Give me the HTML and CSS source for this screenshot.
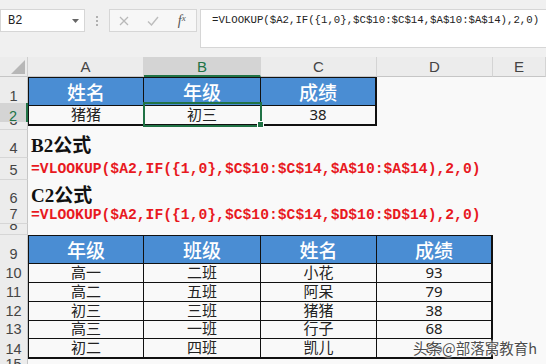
FILE: index.html
```html
<!DOCTYPE html>
<html lang="zh">
<head>
  <meta charset="UTF-8" />
  <title>VLOOKUP 反向查找</title>
  <link rel="stylesheet" href="styles.css">
</head>
<body>
  <div class="toolbar">
    <div class="namebox">
      <span>B2</span>
      <svg width="7" height="4" viewBox="0 0 7 4"><path d="M0 0h7L3.5 4z" fill="#666"/></svg>
    </div>
    <div class="grip"><i></i><i></i><i></i></div>
    <div class="fx-buttons">
      <span><svg width="10" height="10" viewBox="0 0 10 10"><path d="M1 1l8 8M9 1l-8 8" stroke="#b9b9b9" stroke-width="1.3"/></svg></span>
      <span><svg width="12" height="10" viewBox="0 0 12 10"><path d="M1 5.5l3.5 3.5L11 1" stroke="#bdbdbd" stroke-width="1.4" fill="none"/></svg></span>
      <span class="fx">f<sub>x</sub></span>
    </div>
    <div class="formula-input">=VLOOKUP($A2,IF({1,0},$C$10:$C$14,$A$10:$A$14),2,0)</div>
  </div>

  <div class="sheet">
    <div class="row colhead">
      <div class="corner"><svg width="14" height="14" viewBox="0 0 14 14"><path d="M14 0v14H0z" fill="#b7b7b7"/></svg></div>
      <div class="ch">A</div>
      <div class="ch sel">B</div>
      <div class="ch">C</div>
      <div class="ch">D</div>
      <div class="ch">E</div>
    </div>

    <div class="row h26">
      <div class="rh">1</div>
      <div class="c th first top">姓名</div>
      <div class="c th top">年级</div>
      <div class="c th top last">成绩</div>
    </div>
    <div class="row h19">
      <div class="rh sel">2</div>
      <div class="c td first bottom">猪猪</div>
      <div class="c td bottom active">初三</div>
      <div class="c td bottom last num">38</div>
    </div>
    <div class="row h8"><div class="rh">3</div></div>
    <div class="row h28">
      <div class="rh">4</div>
      <div class="note">B2公式</div>
    </div>
    <div class="row h22">
      <div class="rh">5</div>
      <div class="formula">=VLOOKUP($A2,IF({1,0},$C$10:$C$14,$A$10:$A$14),2,0)</div>
    </div>
    <div class="row h25">
      <div class="rh">6</div>
      <div class="note">C2公式</div>
    </div>
    <div class="row h19">
      <div class="rh">7</div>
      <div class="formula">=VLOOKUP($A2,IF({1,0},$C$10:$C$14,$D$10:$D$14),2,0)</div>
    </div>
    <div class="row h11"><div class="rh">8</div></div>

    <div class="row h26">
      <div class="rh">9</div>
      <div class="c th first top">年级</div>
      <div class="c th top">班级</div>
      <div class="c th top">姓名</div>
      <div class="c th top last">成绩</div>
    </div>
    <div class="row h19">
      <div class="rh">10</div>
      <div class="c td first">高一</div><div class="c td">二班</div><div class="c td">小花</div><div class="c td last num">93</div>
    </div>
    <div class="row h19">
      <div class="rh">11</div>
      <div class="c td first">高二</div><div class="c td">五班</div><div class="c td">阿呆</div><div class="c td last num">79</div>
    </div>
    <div class="row h18">
      <div class="rh">12</div>
      <div class="c td first">初三</div><div class="c td">三班</div><div class="c td">猪猪</div><div class="c td last num">38</div>
    </div>
    <div class="row h19">
      <div class="rh">13</div>
      <div class="c td first">高三</div><div class="c td">一班</div><div class="c td">行子</div><div class="c td last num">68</div>
    </div>
    <div class="row h19">
      <div class="rh">14</div>
      <div class="c td first bottom">初二</div><div class="c td bottom">四班</div><div class="c td bottom">凯儿</div><div class="c td bottom last num">86</div>
    </div>
    <div class="row h19"><div class="rh">15</div></div>
  </div>

  <div class="watermark">头条@部落窝教育h</div>
</body>
</html>
```

FILE: styles.css
```css
* {
  box-sizing: border-box;
}
body {
  margin: 0;
  width: 546px;
  height: 364px;
  overflow: hidden;
  position: relative;
  background: #f9f9f9;
  color: #222;
  font-family: "Liberation Sans", "Noto Sans CJK SC", sans-serif;
}

/* formula bar */
.toolbar {
  height: 57px;
  background: #f0f0f0;
  display: flex;
  align-items: flex-start;
  padding-top: 9px;
}
.namebox {
  width: 85px;
  height: 23px;
  background: #fff;
  border: 1px solid #d6d6d6;
  display: flex;
  align-items: center;
  justify-content: space-between;
  padding: 0 5px 0 7px;
  font-size: 12px;
  font-family: "Liberation Mono", monospace;
}
.grip {
  width: 24px;
  height: 23px;
  display: flex;
  flex-direction: column;
  align-items: center;
  justify-content: center;
  gap: 2px;
}
.grip i {
  width: 2px;
  height: 2px;
  background: #b0b0b0;
}
.fx-buttons {
  width: 88px;
  height: 23px;
  background: #f7f7f7;
  border: 1px solid #d6d6d6;
  display: flex;
  align-items: center;
}
.fx-buttons span {
  width: 29px;
  display: flex;
  justify-content: center;
}
.fx {
  font-family: "Liberation Serif", serif;
  font-style: italic;
  font-size: 14px;
  color: #555;
}
.fx sub {
  font-size: 9px;
}
.formula-input {
  flex: 1;
  margin-left: 3px;
  height: 39px;
  background: #fff;
  border: 1px solid #d6d6d6;
  border-right: none;
  padding: 4px 0 0 11px;
  font-family: "Liberation Mono", monospace;
  font-size: 10.7px;
  color: #222;
  white-space: nowrap;
}

/* sheet grid */
.row {
  display: grid;
  grid-template-columns: 28px 116px 117px 116px 116px 1fr;
}
.h26 { height: 26px; }
.h19 { height: 19px; }
.h18 { height: 18px; }
.h8 { height: 8px; }
.h11 { height: 11px; }
.h22 { height: 22px; }
.h25 { height: 25px; }
.h28 { height: 28px; }

.colhead {
  height: 20px;
  background: #ececec;
}
.corner {
  display: flex;
  align-items: flex-end;
  justify-content: flex-end;
  padding: 0 2px 2px 0;
  border-right: 1px solid #cfcfcf;
  border-bottom: 1px solid #c6c6c6;
}
.ch {
  display: flex;
  align-items: center;
  justify-content: center;
  font-size: 15px;
  color: #444;
  border-right: 1px solid #d4d4d4;
  border-bottom: 1px solid #c6c6c6;
}
.ch.sel {
  background: #d4d4d4;
  color: #217346;
  border-bottom: 2px solid #217346;
}
.rh {
  grid-column: 1;
  background: #ececec;
  border-right: 1px solid #c6c6c6;
  border-bottom: 1px solid #d6d6d6;
  display: flex;
  align-items: flex-end;
  justify-content: center;
  overflow: hidden;
  font-size: 14.5px;
  line-height: 17px;
  color: #444;
}
.rh.sel {
  background: #d4d4d4;
  color: #217346;
  border-right: 2px solid #217346;
}

/* cells */
.c {
  display: flex;
  align-items: center;
  justify-content: center;
  border-right: 1px solid #111;
  border-bottom: 1px solid #111;
  font-family: "Noto Sans CJK SC", sans-serif;
  white-space: nowrap;
}
.c.first { border-left: 1px solid #111; }
.c.top { border-top: 1px solid #111; }
.c.last { border-right: 2px solid #111; }
.c.bottom { border-bottom: 2px solid #111; }
.th {
  background: #4a8dd3;
  color: #fff;
  font-size: 19px;
  font-weight: 500;
}
.td {
  font-size: 15px;
  color: #222;
}
.td.num {
  font-family: "Noto Sans", sans-serif;
}
.c.active {
  position: relative;
  outline: 2px solid #217346;
  outline-offset: -1px;
}
.c.active::after {
  content: "";
  position: absolute;
  right: -4px;
  bottom: -4px;
  width: 5px;
  height: 5px;
  background: #217346;
  border: 1px solid #fff;
}

/* notes in rows 4-7 */
.note {
  grid-column: 2 / -1;
  display: flex;
  align-items: flex-end;
  padding: 0 0 1px 3px;
  font-family: "Liberation Serif", "Noto Sans CJK SC", serif;
  font-weight: bold;
  font-size: 19px;
  color: #111;
}
.formula {
  grid-column: 2 / -1;
  display: flex;
  align-items: center;
  padding-left: 3px;
  font-family: "Liberation Mono", monospace;
  font-weight: bold;
  font-size: 14.7px;
  color: #e8191f;
  white-space: nowrap;
}

.watermark {
  position: absolute;
  left: 413px;
  top: 337px;
  font-family: "Noto Sans CJK SC", sans-serif;
  font-size: 14.5px;
  color: #4c4c4c;
  text-shadow: 0 0 2px #fff, 0 0 2px #fff, 0 0 3px #fff;
  white-space: nowrap;
}
```
